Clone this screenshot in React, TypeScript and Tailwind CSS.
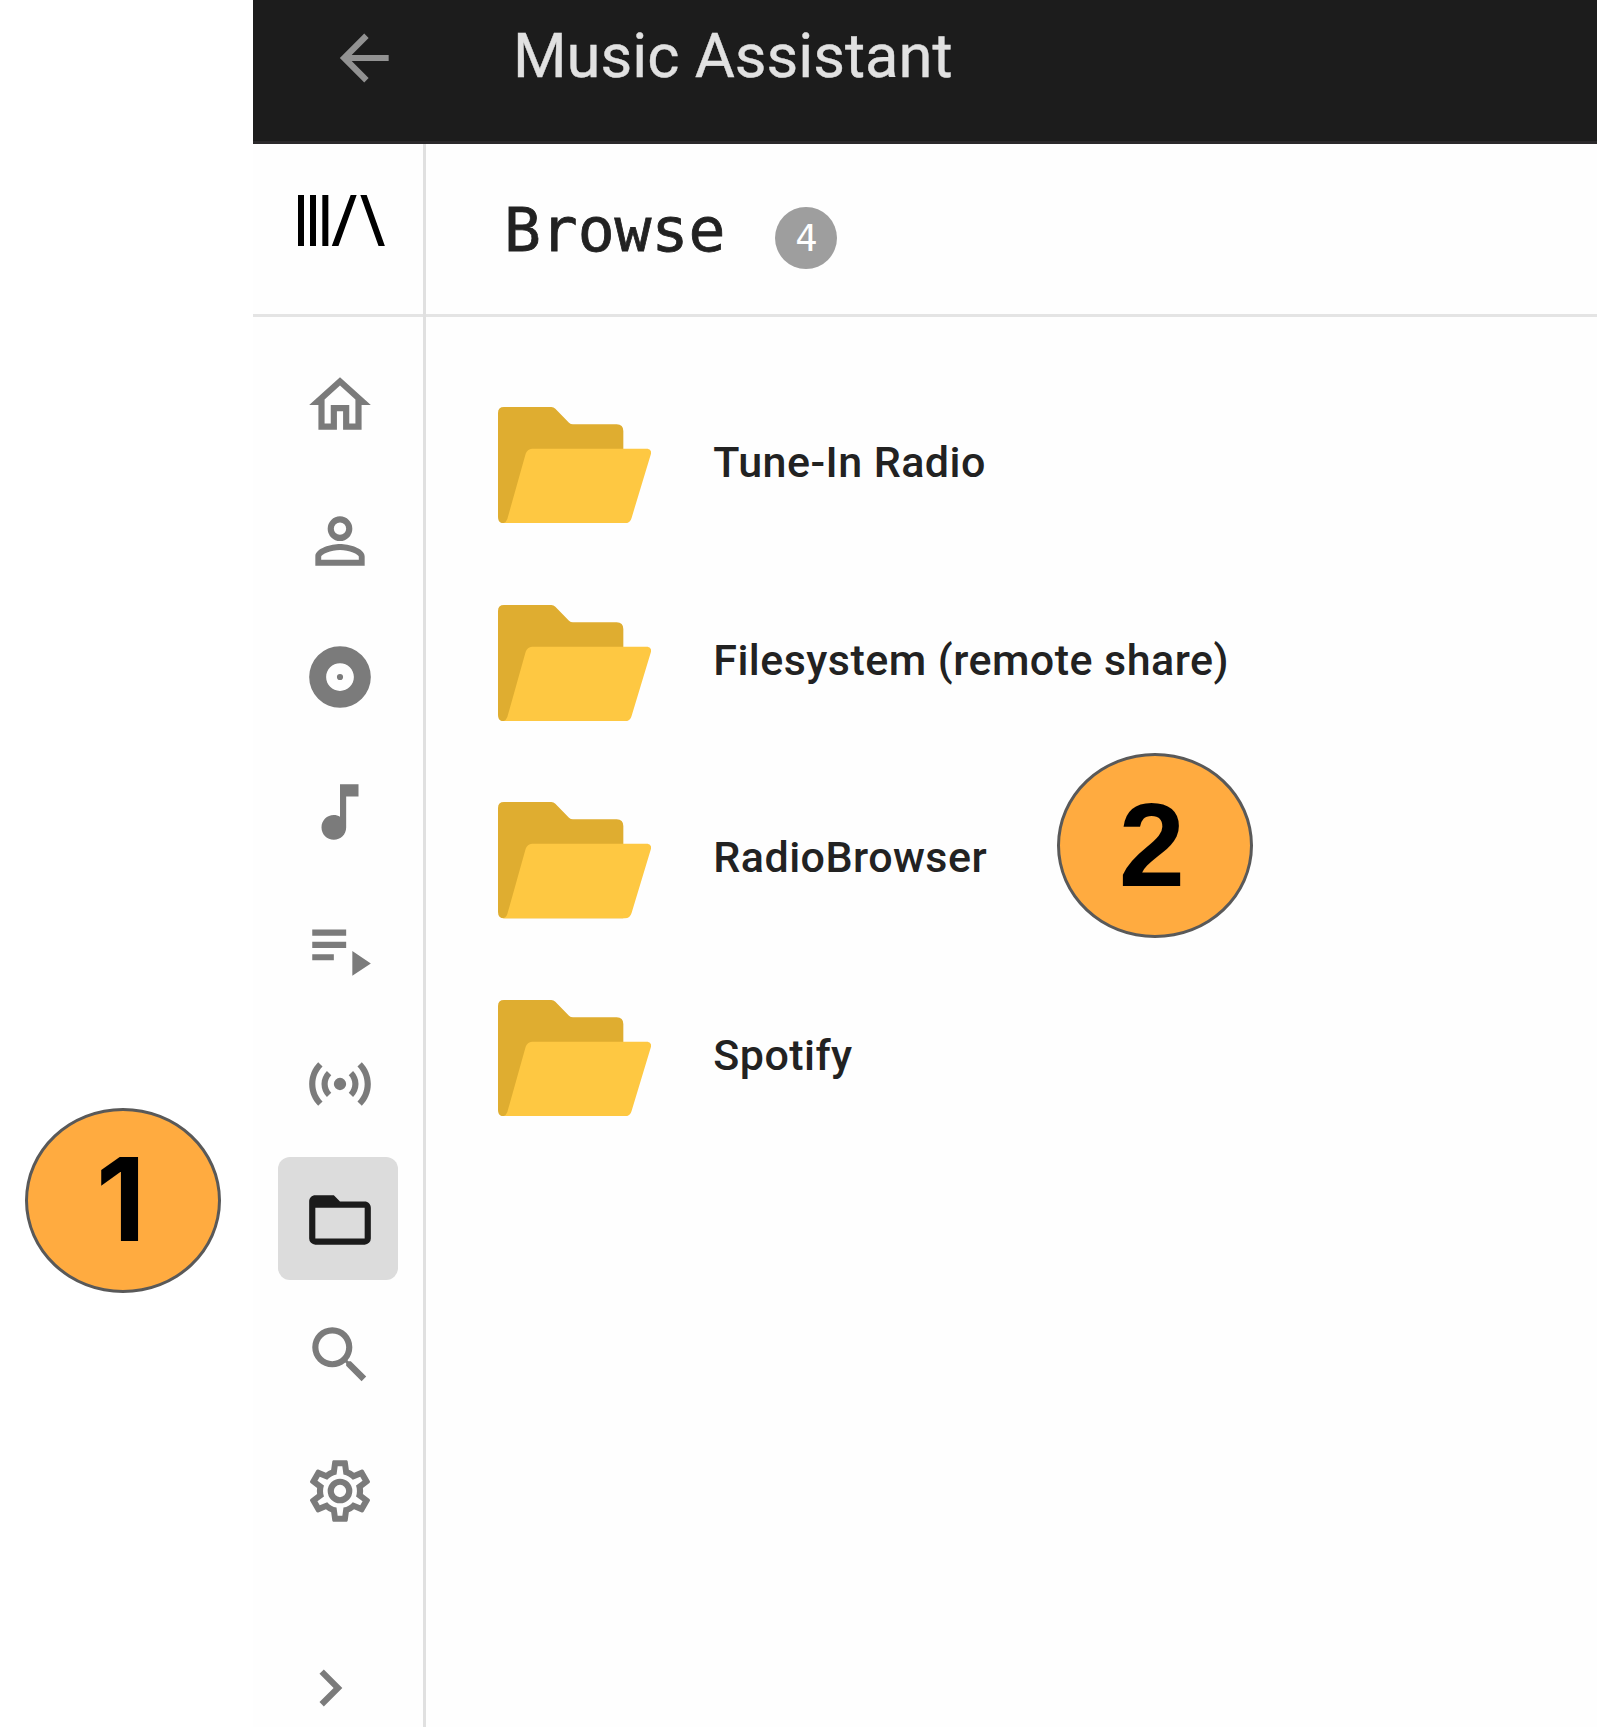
interface NavItem {
  name: string;
  path: string;
  active?: boolean;
}

const navItems: NavItem[] = [
  {
    name: "home",
    path: "M12 5.69L17 10.19V18H15V12H9V18H7V10.19L12 5.69M12 3L2 12H5V20H11V14H13V20H19V12H22L12 3Z",
  },
  {
    name: "artists",
    path: "M12,4A4,4 0 0,1 16,8A4,4 0 0,1 12,12A4,4 0 0,1 8,8A4,4 0 0,1 12,4M12,6A2,2 0 0,0 10,8A2,2 0 0,0 12,10A2,2 0 0,0 14,8A2,2 0 0,0 12,6M12,13C14.67,13 20,14.33 20,17V20H4V17C4,14.33 9.33,13 12,13M12,14.9C9.03,14.9 5.9,16.36 5.9,17V18.1H18.1V17C18.1,16.36 14.97,14.9 12,14.9Z",
  },
  {
    name: "albums",
    path: "M12,11A1,1 0 0,0 11,12A1,1 0 0,0 12,13A1,1 0 0,0 13,12A1,1 0 0,0 12,11M12,16.5C9.5,16.5 7.5,14.5 7.5,12C7.5,9.5 9.5,7.5 12,7.5C14.5,7.5 16.5,9.5 16.5,12C16.5,14.5 14.5,16.5 12,16.5M12,2A10,10 0 0,0 2,12A10,10 0 0,0 12,22A10,10 0 0,0 22,12A10,10 0 0,0 12,2Z",
  },
  {
    name: "tracks",
    path: "M12 3V13.55C11.41 13.21 10.73 13 10 13C7.79 13 6 14.79 6 17S7.79 21 10 21 14 19.21 14 17V7H18V3H12Z",
  },
  {
    name: "playlists",
    path: "M3 10H14V12H3V10M3 6H14V8H3V6M3 14H10V16H3V14M16 13V21L22 17L16 13Z",
  },
  {
    name: "radios",
    path: "M4.93,4.93C3.12,6.74 2,9.24 2,12C2,14.76 3.12,17.26 4.93,19.07L6.34,17.66C4.89,16.22 4,14.22 4,12C4,9.79 4.89,7.78 6.34,6.34L4.93,4.93M19.07,4.93L17.66,6.34C19.11,7.78 20,9.79 20,12C20,14.22 19.11,16.22 17.66,17.66L19.07,19.07C20.88,17.26 22,14.76 22,12C22,9.24 20.88,6.74 19.07,4.93M7.76,7.76C6.67,8.85 6,10.35 6,12C6,13.65 6.67,15.15 7.76,16.24L9.17,14.83C8.45,14.11 8,13.11 8,12C8,10.89 8.45,9.89 9.17,9.17L7.76,7.76M16.24,7.76L14.83,9.17C15.55,9.89 16,10.89 16,12C16,13.11 15.55,14.11 14.83,14.83L16.24,16.24C17.33,15.15 18,13.65 18,12C18,10.35 17.33,8.85 16.24,7.76M12,10A2,2 0 0,0 10,12A2,2 0 0,0 12,14A2,2 0 0,0 14,12A2,2 0 0,0 12,10Z",
  },
  {
    name: "browse",
    path: "M20,18H4V8H20M20,6H12L10,4H4C2.89,4 2,4.89 2,6V18A2,2 0 0,0 4,20H20A2,2 0 0,0 22,18V8C22,6.89 21.1,6 20,6Z",
    active: true,
  },
  {
    name: "search",
    path: "M9.5,3A6.5,6.5 0 0,1 16,9.5C16,11.11 15.41,12.59 14.44,13.73L14.71,14H15.5L20.5,19L19,20.5L14,15.5V14.71L13.73,14.44C12.59,15.41 11.11,16 9.5,16A6.5,6.5 0 0,1 3,9.5A6.5,6.5 0 0,1 9.5,3M9.5,5C7,5 5,7 5,9.5C5,12 7,14 9.5,14C12,14 14,12 14,9.5C14,7 12,5 9.5,5Z",
  },
  {
    name: "settings",
    path: "M12,8A4,4 0 0,1 16,12A4,4 0 0,1 12,16A4,4 0 0,1 8,12A4,4 0 0,1 12,8M12,10A2,2 0 0,0 10,12A2,2 0 0,0 12,14A2,2 0 0,0 14,12A2,2 0 0,0 12,10M10,22C9.75,22 9.54,21.82 9.5,21.58L9.13,18.93C8.5,18.68 7.96,18.34 7.44,17.94L4.95,18.95C4.73,19.03 4.46,18.95 4.34,18.73L2.34,15.27C2.21,15.05 2.27,14.78 2.46,14.63L4.57,12.97L4.5,12L4.57,11L2.46,9.37C2.27,9.22 2.21,8.95 2.34,8.73L4.34,5.27C4.46,5.05 4.73,4.96 4.95,5.05L7.44,6.05C7.96,5.66 8.5,5.32 9.13,5.07L9.5,2.42C9.54,2.18 9.75,2 10,2H14C14.25,2 14.46,2.18 14.5,2.42L14.87,5.07C15.5,5.32 16.04,5.66 16.56,6.05L19.05,5.05C19.27,4.96 19.54,5.05 19.66,5.27L21.66,8.73C21.79,8.95 21.73,9.22 21.54,9.37L19.43,11L19.5,12L19.43,13L21.54,14.63C21.73,14.78 21.79,15.05 21.66,15.27L19.66,18.73C19.54,18.95 19.27,19.04 19.05,18.95L16.56,17.95C16.04,18.34 15.5,18.68 14.87,18.93L14.5,21.58C14.46,21.82 14.25,22 14,22H10M11.25,4L10.88,6.61C9.68,6.86 8.62,7.5 7.85,8.39L5.44,7.35L4.69,8.65L6.8,10.2C6.4,11.37 6.4,12.64 6.8,13.8L4.68,15.36L5.43,16.66L7.86,15.62C8.63,16.5 9.68,17.14 10.87,17.38L11.24,20H12.76L13.13,17.39C14.32,17.14 15.37,16.5 16.14,15.62L18.57,16.66L19.32,15.36L17.2,13.81C17.6,12.64 17.6,11.37 17.2,10.2L19.31,8.65L18.56,7.35L16.15,8.39C15.38,7.5 14.32,6.86 13.12,6.62L12.75,4H11.25Z",
  },
];

const providers = ["Tune-In Radio", "Filesystem (remote share)", "RadioBrowser", "Spotify"];

function Icon({ path, className }: { path: string; className?: string }) {
  return (
    <svg viewBox="0 0 24 24" fill="currentColor" className={`size-[74px] shrink-0 ${className ?? ""}`}>
      <path d={path} />
    </svg>
  );
}

function Logo() {
  return (
    <svg viewBox="0 0 261 154" className="h-[51.33px] w-[87px]">
      <path d="M0 0H18V154H0ZM36 0H54V154H36ZM73 0H91V154H73ZM158 0H176L121 154H101ZM187 0H206L261 154H242Z" />
    </svg>
  );
}

function FolderIcon() {
  return (
    <svg viewBox="0 0 459 349" className="h-[116.33px] w-[153px] shrink-0">
      <path
        d="M18 0H160Q167 0 172 5L213 47Q218 52 225 52H356Q376 53 376 72V349H18Q0 349 0 330V18Q0 0 18 0Z"
        fill="#dfad30"
      />
      <path
        d="M102 125H449Q461 127 459 140L401 332Q396 349 381 349H14Q24 347 28 336L83 140Q88 126 102 125Z"
        fill="#fec842"
      />
    </svg>
  );
}

function StepBadge({ label, className }: { label: string; className: string }) {
  return (
    <div
      className={`absolute flex h-[185px] w-[196px] items-center justify-center rounded-[50%] border-[3px] border-[#595959] bg-[#ffab40] leading-none font-bold text-black ${className}`}
    >
      {label}
    </div>
  );
}

export default function App() {
  return (
    <div className="relative flex h-[1727px] w-[1597px] overflow-hidden bg-white pl-[253.4px] font-[Roboto,sans-serif]">
      <div className="flex min-w-0 flex-1 flex-col bg-[#fefefe]">
        <header className="flex h-36 shrink-0 items-start border-b-[3px] border-[#2b292b] bg-[#1c1c1c] pl-[74px]">
          <Icon
            path="M20,11V13H8L13.5,18.5L12.08,19.92L4.16,12L12.08,4.08L13.5,5.5L8,11H20Z"
            className="mt-[20.5px] text-[#929292]"
          />
          <h1 className="mt-[20px] ml-[111.5px] text-[61.5px] leading-[73px] whitespace-nowrap text-[#e1e1e1] [-webkit-text-stroke:0.4px_#e1e1e1]">
            Music Assistant
          </h1>
        </header>

        <div className="flex min-h-0 flex-1">
          {/* Sidebar */}
          <nav className="flex w-[173px] shrink-0 flex-col border-r-[3px] border-[#e0e0e0]">
            <div className="flex h-[173px] shrink-0 items-start border-b-[3px] border-[#e4e4e4] pt-[51px] pl-[45px]">
              <Logo />
            </div>
            <div className="mt-[25px] ml-[24.5px] flex flex-col gap-[12.5px]">
              {navItems.map((item) => (
                <div
                  key={item.name}
                  className={`flex h-[123.25px] w-[120.5px] shrink-0 items-center justify-center rounded-xl pt-[3px] pl-[3px] ${
                    item.active ? "bg-[#dcdcdc] text-[#1b1b1b]" : "text-[#7b7b7b]"
                  }`}
                >
                  <Icon path={item.path} />
                </div>
              ))}
            </div>
            <div className="mt-[99.5px] ml-[39.6px] text-[#7b7b7b]">
              <Icon path="M8.59,16.58L13.17,12L8.59,7.41L10,6L16,12L10,18L8.59,16.58Z" />
            </div>
          </nav>

          <main className="min-w-0 flex-1">
            <div className="flex h-[173px] items-start border-b-[3px] border-[#e4e4e4] pl-[77.5px] text-[#222222]">
              <h2 className="mt-[49.5px] font-['DejaVu_Sans_Mono',monospace] text-[61.3px] leading-[72px] whitespace-nowrap [-webkit-text-stroke:0.8px_#222222]">
                Browse
              </h2>
              <span className="mt-[63px] ml-[50px] flex size-[62px] items-center justify-center rounded-full bg-[#9e9e9e] font-['DejaVu_Sans_Mono',monospace] text-[37px] leading-none text-white">
                4
              </span>
            </div>
            <ul className="pt-[89.8px] pl-[71.3px]">
              {providers.map((name) => (
                <li key={name} className="mb-[81.4px] flex h-[116.33px] items-center">
                  <FolderIcon />
                  <span className="ml-[62.6px] pb-[5px] text-[43px] leading-none font-medium tracking-[0.46px] whitespace-nowrap text-[#222222]">
                    {name}
                  </span>
                </li>
              ))}
            </ul>
          </main>
        </div>
      </div>

      {/* Numbered callouts, the "1" is set in Inter because its numeral has no foot */}
      <StepBadge
        label="1"
        className="top-[1108.4px] left-[25.2px] pr-[5px] pb-[3px] font-[Inter,sans-serif] text-[115px]"
      />
      <StepBadge
        label="2"
        className="top-[753.4px] left-[1057.4px] pr-[7px] pb-[2px] font-['Liberation_Sans',Arial,sans-serif] text-[119px]"
      />
    </div>
  );
}
